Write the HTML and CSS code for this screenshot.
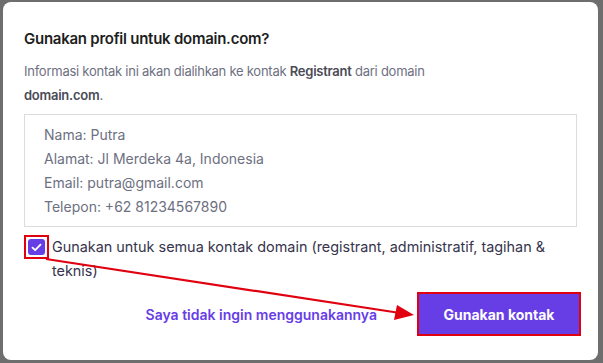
FILE: index.html
```html
<!DOCTYPE html>
<html lang="id">
<head>
  <meta charset="UTF-8" />
  <meta name="viewport" content="width=device-width, initial-scale=1" />
  <title>Gunakan profil</title>
  <link rel="stylesheet" href="styles.css">
</head>
<body>
  <div class="dialog">
    <h2 class="dialog-title">Gunakan profil untuk domain.com?</h2>
    <p class="dialog-text">Informasi kontak ini akan dialihkan ke kontak <strong>Registrant</strong> dari domain <strong>domain.com</strong>.</p>

    <div class="contact-box">
      <div>Nama: Putra</div>
      <div>Alamat: Jl Merdeka 4a, Indonesia</div>
      <div>Email: putra@gmail.com</div>
      <div>Telepon: +62 81234567890</div>
    </div>

    <label class="check-row">
      <span class="check-mark">
        <span class="check-box">
          <svg width="11" height="9" viewBox="0 0 11 9"><path d="M1.5 4.6 L4.2 7.2 L9.5 1.6" fill="none" stroke="#fff" stroke-width="1.8" stroke-linecap="round" stroke-linejoin="round"/></svg>
        </span>
      </span>
      <span class="check-label">Gunakan untuk semua kontak domain (registrant, administratif, tagihan &amp; teknis)</span>
    </label>

    <div class="actions">
      <a class="link-btn" href="#">Saya tidak ingin menggunakannya</a>
      <span class="highlight">
        <button class="primary-btn">Gunakan kontak</button>
      </span>
    </div>

    <!-- annotation arrow -->
    <svg class="annotation" width="603" height="363" viewBox="0 0 603 363">
      <line x1="46" y1="259" x2="400" y2="313" stroke="#e00010" stroke-width="2.2"/>
      <polygon points="414,315 397,305 394,320" fill="#e00010"/>
    </svg>
  </div>
</body>
</html>
```

FILE: styles.css
```css
:root {
  --purple: #673de6;
  --title: #1d1e20;
  --muted: #6d7081;
  --text: #36344d;
  --border: #dadce0;
  --annot: #e00010;
}

body {
  margin: 0;
  background: #6e6e6e;
  font-family: 'Inter', 'Noto Sans', sans-serif;
}

.dialog {
  position: relative;
  box-sizing: border-box;
  height: 358px;
  margin: 2px 5px 3px 3px;
  padding: 25px 21px 0 21px;
  background: #fff;
  border-radius: 8px;
}

.dialog-title {
  margin: 0;
  font-size: 15px;
  line-height: 24px;
  font-weight: 600;
  color: var(--title);
  letter-spacing: -0.25px;
}

.dialog-text {
  max-width: 440px;
  margin: 8px 0 0;
  font-size: 13px;
  line-height: 24px;
  letter-spacing: -0.25px;
  color: var(--muted);
}

.dialog-text strong {
  font-weight: 600;
  color: #4a4b57;
}

.contact-box {
  margin-top: 7px;
  padding: 8px 19px 7px;
  border: 1px solid var(--border);
  font-size: 14px;
  line-height: 24px;
  color: var(--muted);
}

.check-row {
  display: flex;
  align-items: flex-start;
  gap: 3px;
  margin-top: 8px;
  font-size: 14.4px;
  line-height: 24px;
  color: var(--text);
  cursor: pointer;
}

.check-mark {
  flex: none;
  box-sizing: border-box;
  width: 25px;
  height: 24px;
  padding: 2px;
  border: 2px solid var(--annot);
  display: flex;
}

.check-box {
  flex: 1;
  background: var(--purple);
  border-radius: 3px;
  display: flex;
  align-items: center;
  justify-content: center;
}

.actions {
  display: flex;
  justify-content: flex-end;
  align-items: center;
  gap: 40px;
  margin-top: 9px;
  margin-right: -4px;
}

.link-btn {
  font-size: 14px;
  font-weight: 600;
  color: var(--purple);
  text-decoration: none;
}

.highlight {
  display: flex;
  border: 2px solid var(--annot);
}

.primary-btn {
  width: 160px;
  height: 40px;
  border: none;
  background: var(--purple);
  color: #fff;
  font-family: 'Inter', 'Noto Sans', sans-serif;
  font-size: 14px;
  font-weight: 700;
  cursor: pointer;
}

.annotation {
  position: absolute;
  left: -3px;
  top: -2px;
  pointer-events: none;
}
```
